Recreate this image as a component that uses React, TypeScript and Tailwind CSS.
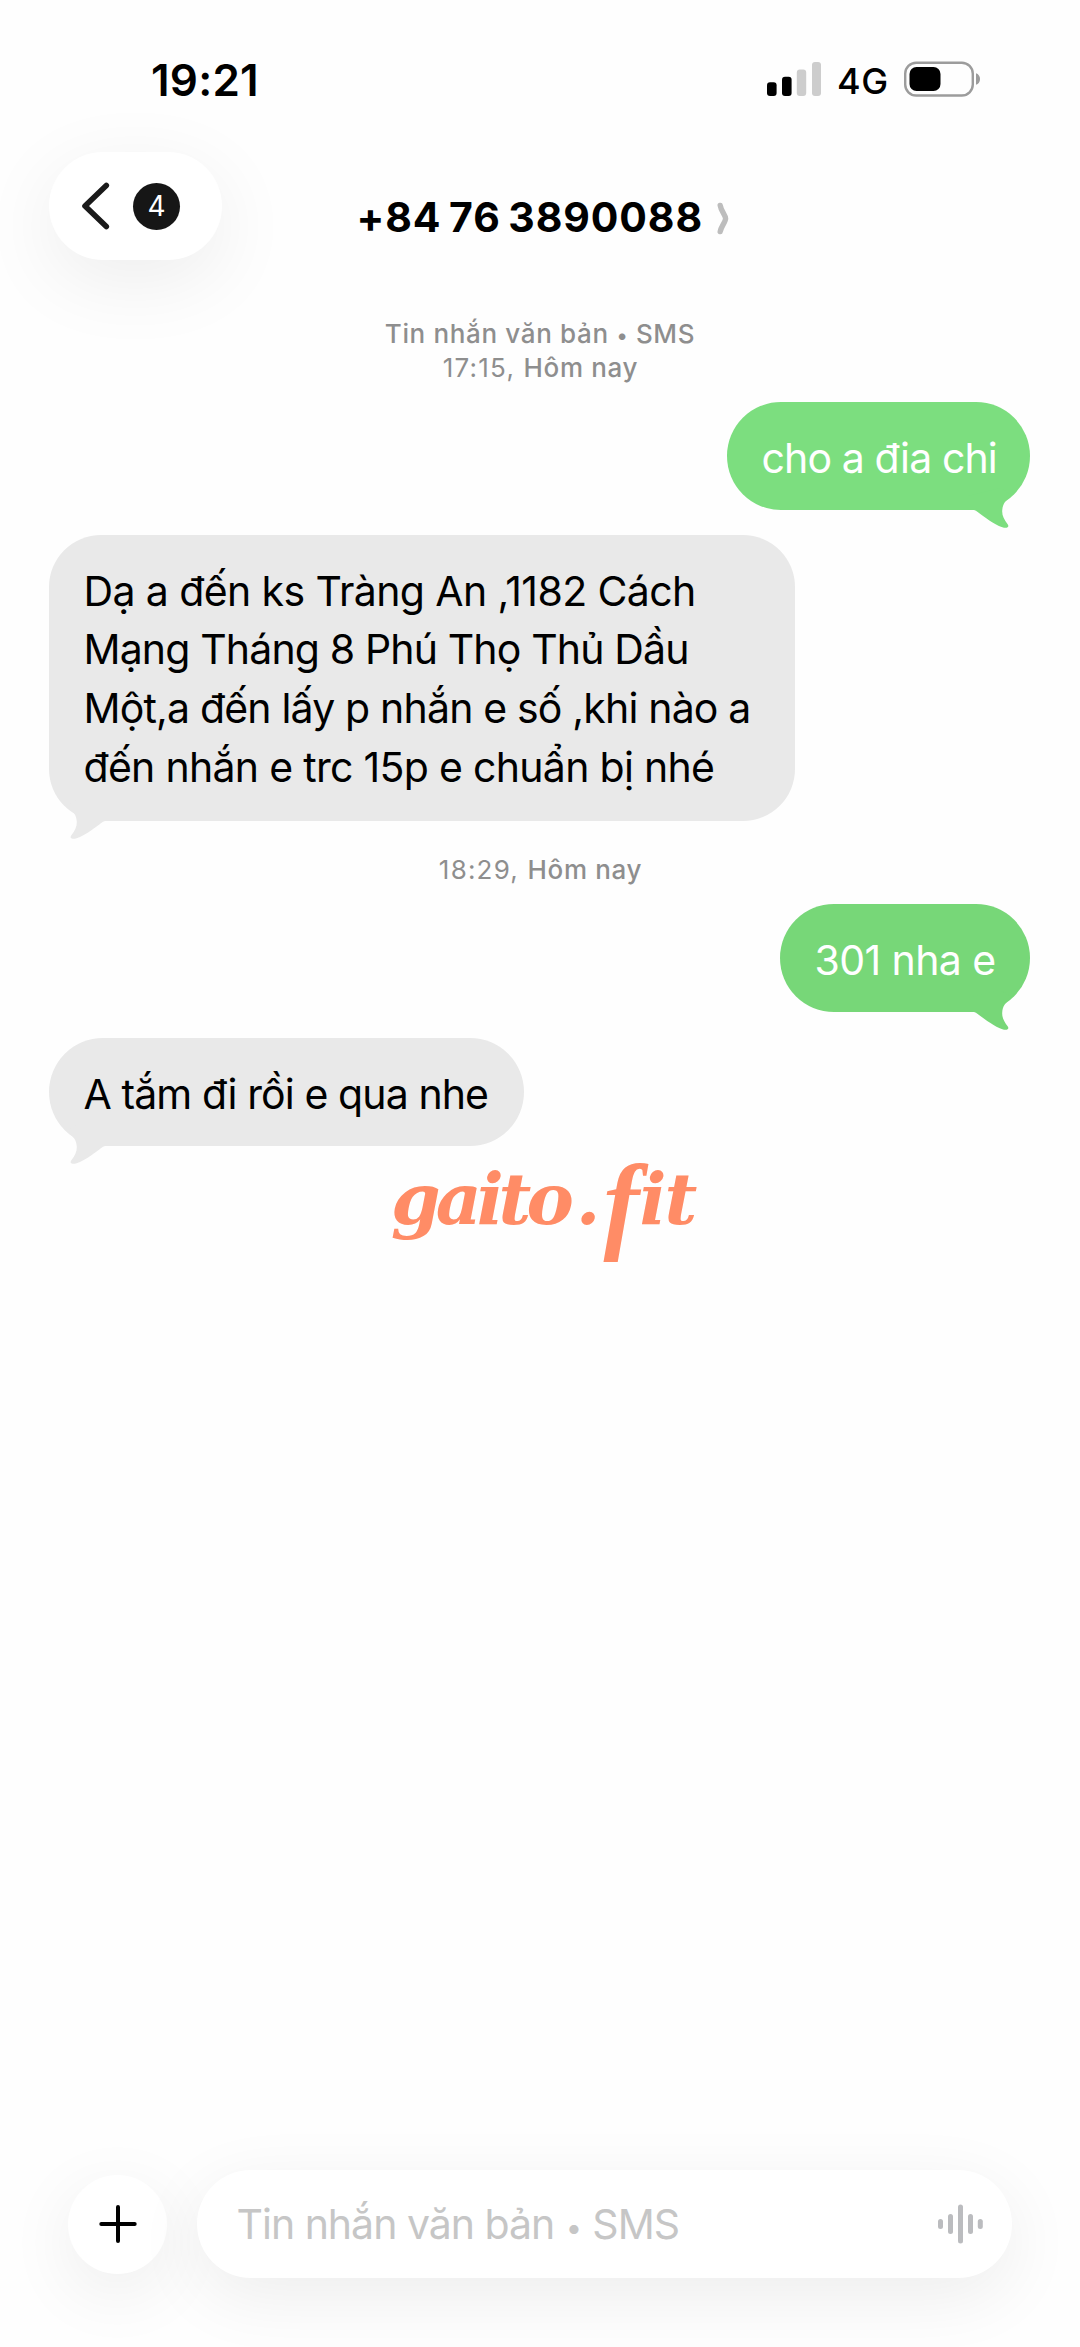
import React from "react";

type Line = { text: string; tracking: string };

type BubbleProps = {
  lines: Line[];
  mine?: boolean;
  className: string;
  tailColor: string;
};

const addressLines: Line[] = [
  { text: "Dạ a đến ks Tràng An ,1182 Cách", tracking: "tracking-[-0.6px]" },
  { text: "Mạng Tháng 8 Phú Thọ Thủ Dầu", tracking: "tracking-[-0.85px]" },
  { text: "Một,a đến lấy p nhắn e số ,khi nào a", tracking: "tracking-[-0.82px]" },
  { text: "đến nhắn e trc 15p e chuẩn bị nhé", tracking: "tracking-[-0.7px]" },
];

const Tail = ({ mine, color }: { mine?: boolean; color: string }) => (
  <svg
    viewBox="0 0 70 42"
    className={`absolute w-[70px] h-[42px] bottom-[-20px] ${mine ? "right-0" : "left-0 -scale-x-100"}`}
  >
    <path
      d="M8 21.8 C16 21.8 15.5 22.5 19 25 C29 32.5 38 38.5 44 39.7 C47.5 40.4 49.3 38.8 47.8 36.5 C44 31.5 42 27.5 42.2 23 C42.5 16 45.5 12.5 52 7 L40 0 L8 8 Z"
      fill={color}
    />
  </svg>
);

const Bubble = ({ lines, mine, className, tailColor }: BubbleProps) => (
  <div
    className={`relative pl-[34.5px] pt-[26.5px] text-[41px] leading-[58.7px] whitespace-nowrap ${className} ${
      mine ? "self-end text-white" : "self-start bg-[#e9e9e9] text-black"
    }`}
  >
    <Tail mine={mine} color={tailColor} />
    {lines.map((line) => (
      <p key={line.text} className={`relative ${line.tracking}`}>
        {line.text}
      </p>
    ))}
  </div>
);

const StatusBar = () => (
  <div className="flex items-center h-20 mt-10 pl-[151px] pr-[99px]">
    <span className="text-[44px] font-semibold leading-none tracking-[0.2px]">19:21</span>
    <div className="flex items-center ml-auto">
      <svg width="54" height="34" viewBox="0 0 54 34" className="mb-[2px]">
        <rect x="0" y="20.3" width="9.6" height="13.7" rx="3" fill="#000" />
        <rect x="15" y="14.7" width="9.6" height="19.3" rx="3" fill="#000" />
        <rect x="29.8" y="7.5" width="9.4" height="26.5" rx="3" fill="#cdcdcd" />
        <rect x="45" y="0" width="9" height="34" rx="3" fill="#cdcdcd" />
      </svg>
      <span className="w-[66px] ml-[16.5px] text-[36px] font-medium leading-none tracking-[0.5px] relative top-px">4G</span>
      <svg width="78" height="36" viewBox="0 0 78 36" className="mb-[2px]">
        <rect x="2.2" y="1.7" width="67.6" height="32.8" rx="11" fill="none" stroke="#9c9c9c" strokeWidth="2.4" />
        <rect x="6.5" y="6" width="31" height="24" rx="7" fill="#000" />
        <path d="M73 12.2 C75.5 13 77 15.2 77 18 C77 20.8 75.5 23 73 23.8 Z" fill="#9c9c9c" />
      </svg>
    </div>
  </div>
);

const Header = () => (
  <header className="flex items-center mt-8 pl-[49px] h-[108px]">
    <button className="flex items-center w-[173px] h-[108px] pl-[31px] rounded-full bg-white shadow-[0_20px_80px_rgba(0,0,0,0.07)]">
      <svg width="31" height="50" viewBox="0 0 31 50" fill="none" stroke="#1a1a1a" strokeWidth="5.6" strokeLinecap="round" strokeLinejoin="round">
        <path d="M26.3 4.5 L5 25 L26.3 45.5" />
      </svg>
      <span className="flex items-center justify-center w-[47px] h-[47px] ml-[22px] rounded-full bg-[#161616] text-[28px] leading-none text-white">
        4
      </span>
    </button>
    <h1 className="ml-[134.5px] mt-[23px] w-[358px] text-[41px] font-bold leading-none tracking-[0.9px] [word-spacing:-3px] whitespace-nowrap">
      +84 76 3890088
    </h1>
    <svg width="14" height="33" viewBox="0 0 14 33" fill="none" stroke="#bdbdbd" strokeWidth="5.4" strokeLinecap="round" strokeLinejoin="round" className="mt-[25px]">
      <path d="M5.2 3.4 C6 9 10.6 13 10.6 16.5 C10.6 20 6 24.5 5.2 29.6" />
    </svg>
  </header>
);

const Stamp = ({ time }: { time: string }) => (
  <p className="pl-[2px] text-[26px] leading-[34px] font-medium tracking-[0.65px] whitespace-pre">
    <span className="font-normal tracking-[1.2px]">{time}, </span>Hôm nay
  </p>
);

// The "f" swings below the baseline, so it is set larger and lower than its neighbours
const Watermark = () => (
  <div className="flex pl-[342px] h-[102px] mt-[2px] text-[71px] leading-[102px] font-bold italic text-[#ff8c66] font-['DejaVu_Serif',serif]">
    <span className="tracking-[-5px]">gaito</span>
    <span className="ml-[7px]">.</span>
    <span className="ml-[3px] translate-y-[4px] text-[108px] font-['Liberation_Serif',serif]">f</span>
    <span className="tracking-[-2px]">it</span>
  </div>
);

const WAVE_BARS = [
  { x: 0, h: 10 },
  { x: 10, h: 20 },
  { x: 20, h: 39 },
  { x: 30, h: 20 },
  { x: 39.8, h: 10 },
];

const Composer = () => (
  <footer className="flex items-center mt-auto mb-[69px] pl-[68px] pr-[68px] h-[108px]">
    <button className="flex items-center justify-center w-[99px] h-[99px] rounded-full bg-white shadow-[0_18px_70px_rgba(0,0,0,0.07)]">
      <svg width="40" height="40" viewBox="0 0 40 40" stroke="#000" strokeWidth="4" strokeLinecap="round">
        <path d="M20 3 V37 M3.3 20 H36.7" />
      </svg>
    </button>
    <div className="flex items-center justify-between ml-[29.5px] w-[815.5px] h-[108px] pl-10 pr-[29px] rounded-full bg-white shadow-[0_18px_70px_rgba(0,0,0,0.07)]">
      <span className="text-[41px] leading-none tracking-[-1px] whitespace-nowrap text-[#c6c6c6]">
        Tin nhắn văn bản <span className="inline-block w-[17px] text-center text-[29px] leading-none align-[1px]">•</span> SMS
      </span>
      <svg width="45" height="40" viewBox="0 0 45 40" fill="#bbbcbf">
        {WAVE_BARS.map(({ x, h }) => (
          <rect key={x} x={x} y={20 - h / 2} width="5" height={h} rx="2.5" />
        ))}
      </svg>
    </div>
  </footer>
);

export default function App() {
  return (
    <div className="flex flex-col w-[1080px] h-[2347px] overflow-hidden bg-[#fefefe] text-black font-['Inter',sans-serif]">
      <StatusBar />
      <Header />

      <main className="flex flex-col pl-[49px] pr-[50px]">
        <div className="flex flex-col items-center mt-[57px] text-[#8e8e8e]">
          <p className="h-[34px] pl-px text-[26px] leading-[34px] font-medium tracking-[0.65px]">
            Tin nhắn văn bản <span className="inline-block w-[12px] text-center text-[21px] leading-none align-[0.5px]">•</span> SMS
          </p>
          <Stamp time="17:15" />
        </div>

        <Bubble
          mine
          className="w-[303px] h-[108px] mt-[17px] rounded-[54px] bg-[#7cde7f]"
          tailColor="#7cde7f"
          lines={[{ text: "cho a đia chi", tracking: "tracking-[-0.89px]" }]}
        />
        <Bubble className="w-[746px] h-[286px] mt-[25px] rounded-[52px]" tailColor="#e9e9e9" lines={addressLines} />

        <div className="flex justify-center mt-[32px] text-[#8e8e8e]">
          <Stamp time="18:29" />
        </div>

        <Bubble
          mine
          className="w-[250px] h-[108px] mt-[17px] rounded-[54px] bg-[#77d778]"
          tailColor="#77d778"
          lines={[{ text: "301 nha e", tracking: "tracking-[-0.59px]" }]}
        />
        <Bubble
          className="w-[475px] h-[108px] mt-[26px] rounded-[54px]"
          tailColor="#e9e9e9"
          lines={[{ text: "A tắm đi rồi e qua nhe", tracking: "tracking-[-0.9px]" }]}
        />

        <Watermark />
      </main>

      <Composer />
    </div>
  );
}
